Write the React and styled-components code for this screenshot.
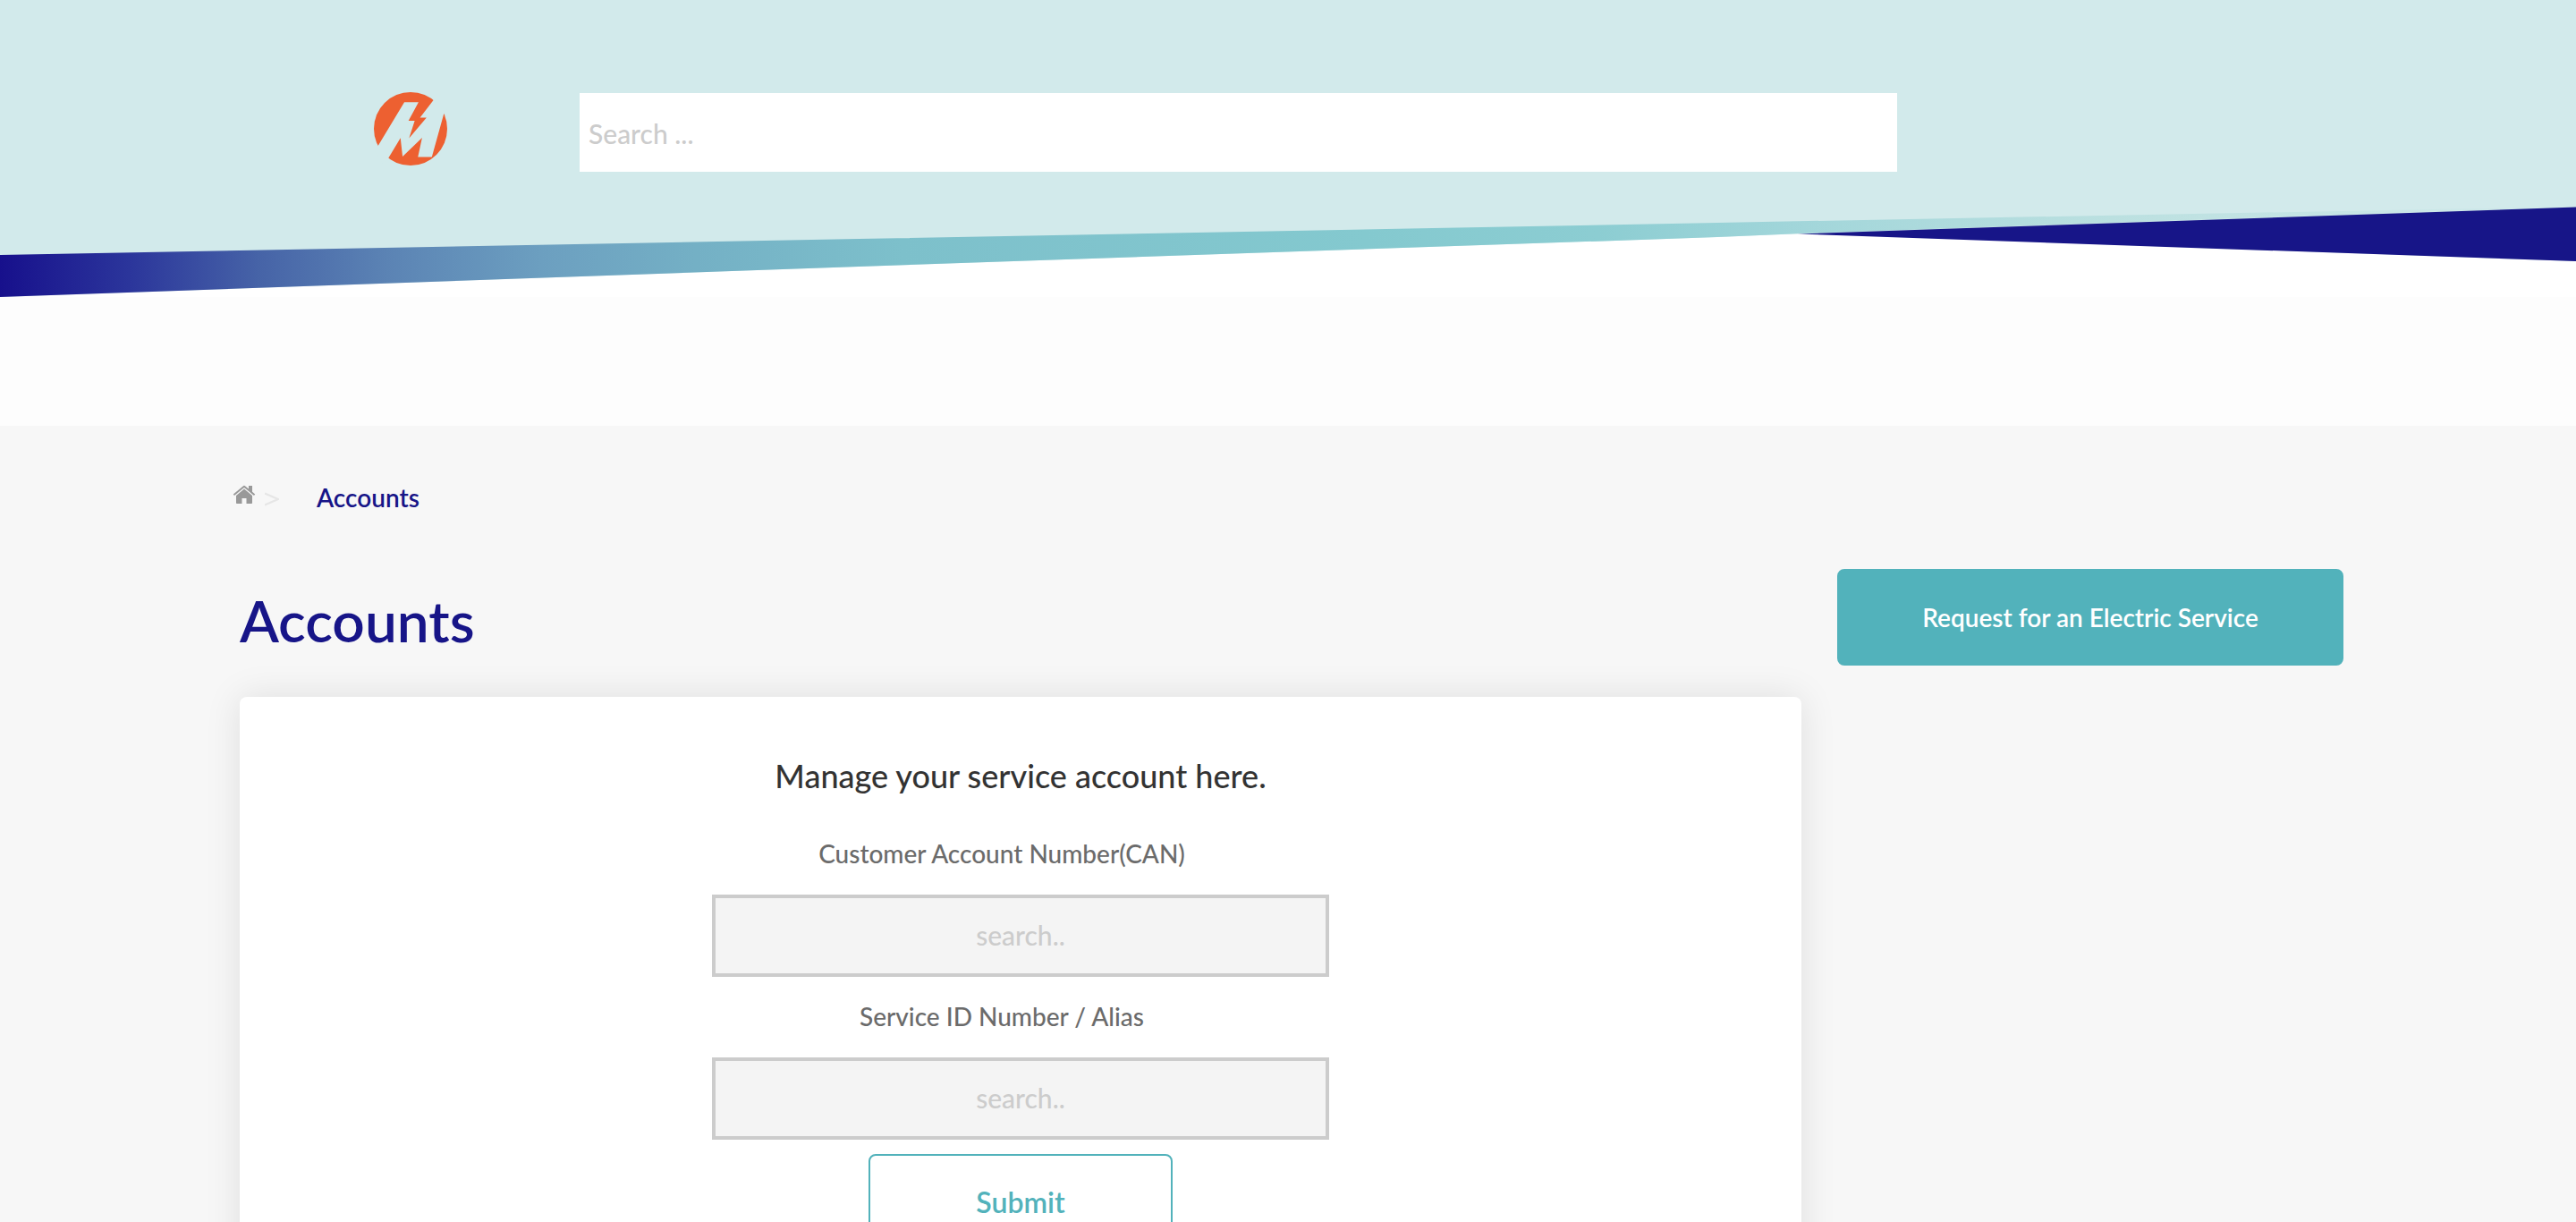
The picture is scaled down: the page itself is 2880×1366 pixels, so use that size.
import React from "react";
import styled, { createGlobalStyle } from "styled-components";

const GlobalStyle = createGlobalStyle`
  *, *::before, *::after { box-sizing: border-box; }
  body {
    margin: 0;
    background: #f7f7f7;
    font-family: Lato, "Open Sans", sans-serif;
    color: #333;
  }
`;

const Page = styled.div`
  height: 100vh;
  overflow: hidden auto;
  scrollbar-width: none;
`;

const Header = styled.header`
  background: #d2eaeb;
`;

const Toolbar = styled.div`
  display: flex;
  align-items: center;
  gap: 148px;
  padding: 103px 759px 38px 418px;
`;

const LogoLink = styled.a`
  display: block;
  flex: none;
  width: 82px;
  height: 90px;

  svg { display: block; width: 82px; height: 82px; }
`;

const SearchForm = styled.form`
  flex: 1;
  display: flex;
`;

const SiteSearch = styled.input`
  width: 100%;
  height: 88px;
  padding: 2px 10px 0;
  border: 0;
  border-radius: 0;
  background: #fff;
  font: 500 30px/36px Lato, sans-serif;
  color: #333;
  &::placeholder { color: #ccc; opacity: 1; }
`;

const Wave = styled.svg`
  display: block;
  width: 100%;
  height: 101px;
`;

const NavStrip = styled.div`
  height: 144px;
  background: #fdfdfd;
`;

const Main = styled.main`
  padding: 62px 260px 60px 268px;
`;

const Breadcrumb = styled.nav`
  display: flex;
  align-items: center;
  height: 36px;
  margin-left: -8px;
  font-size: 28px;
  line-height: 36px;
`;

const HomeLink = styled.a`
  display: block;
  width: 26px;
  height: 28px;
  color: #999;
  svg { display: block; width: 26px; height: 22px; }
`;

const Separator = styled.svg`
  width: 16px;
  height: 16px;
  margin: 4px 42px 0 10px;
`;

const Crumb = styled.a`
  color: #171588;
  font-weight: 600;
  text-decoration: none;
`;

const Columns = styled.div`
  display: grid;
  grid-template-columns: minmax(0, 1fr) 566px;
  align-items: start;
  gap: 40px;
  margin-top: 62px;
`;

const Title = styled.h1`
  margin: 18px 0 45px;
  font-size: 64px;
  line-height: 80px;
  font-weight: 600;
  color: #171588;
`;

const Card = styled.section`
  padding: 64px 40px;
  border-radius: 8px;
  background: #fff;
  box-shadow: 0 0 40px rgba(0, 0, 0, 0.1);
`;

const CardTitle = styled.h2`
  margin: 0;
  font-size: 36px;
  line-height: 48px;
  font-weight: 500;
  text-align: center;
`;

const AccountForm = styled.form`
  display: flex;
  flex-direction: column;
  align-items: center;
  width: 690px;
  max-width: 100%;
  margin: 19px auto 0;
`;

const Label = styled.label`
  margin-right: 42px;
  padding: 26px 0 28px;
  font-size: 28px;
  line-height: 36px;
  font-weight: 500;
  color: #6b6b6b;
`;

const Field = styled.input`
  width: 100%;
  height: 92px;
  padding: 0 10px 2px;
  border: 4px solid #ccc;
  border-radius: 0;
  background: #f4f4f4;
  font: 500 30px/36px Lato, sans-serif;
  color: #333;
  text-align: center;
  &::placeholder { color: #ccc; opacity: 1; }
`;

const Button = styled.button`
  width: ${(p) => (p.$primary ? "100%" : "340px")};
  height: 108px;
  margin-top: ${(p) => (p.$primary ? "0" : "16px")};
  border: 2px solid #52b2bb;
  border-radius: 8px;
  background: ${(p) => (p.$primary ? "#52b2bb" : "#fff")};
  color: ${(p) => (p.$primary ? "#fff" : "#52b2bb")};
  font: 600 ${(p) => (p.$primary ? "28px" : "32px")}/36px Lato, sans-serif;
  cursor: pointer;
`;

function Logo() {
  return (
    <svg viewBox="0 0 248 248" aria-hidden="true">
      <circle cx="124" cy="124" r="124" fill="#ed6031" />
      <path
        fill="#d2eaeb"
        d="M103 34H151L117 97H138L119 156L178 86H156L203 25L240 -4L262 40L237 72L196 219H149L163 154L97 218L90 155L49 223L30 240L4 200L15 180Z"
      />
    </svg>
  );
}

function Swoosh() {
  return (
    <Wave viewBox="0 0 2880 101" preserveAspectRatio="none" aria-hidden="true">
      <defs>
        <linearGradient id="ribbon" gradientUnits="userSpaceOnUse" x1="0" y1="0" x2="2880" y2="0">
          <stop offset="0" stopColor="#17108c" />
          <stop offset="0.05" stopColor="#2b359b" />
          <stop offset="0.1" stopColor="#4663a7" />
          <stop offset="0.15" stopColor="#5b83b4" />
          <stop offset="0.21" stopColor="#6c9fc0" />
          <stop offset="0.27" stopColor="#74b0c5" />
          <stop offset="0.35" stopColor="#7dc0cb" />
          <stop offset="0.53" stopColor="#84c9cf" />
          <stop offset="0.62" stopColor="#8ccdd2" />
          <stop offset="0.7" stopColor="#a2d6da" />
          <stop offset="0.82" stopColor="#bbe0e0" />
          <stop offset="1" stopColor="#d2eaeb" />
        </linearGradient>
      </defs>
      <path d="M0 101L960 67L1920 34L2015 30L2880 61V101Z" fill="#fff" />
      <path d="M0 54L960 36L1920 18L2880 0L2015 30L1920 34L960 67L0 101Z" fill="url(#ribbon)" />
      <path d="M2010 30.500L2880 0.500V61Z" fill="#171588" />
    </Wave>
  );
}

function HomeIcon() {
  return (
    <svg viewBox="0 0 26 22" fill="currentColor" aria-hidden="true">
      <path d="M13 4.500L4 12V20.200Q4 21 4.800 21H10.500V15H15.500V21H21.200Q22 21 22 20.200V12Z" />
      <path d="M13 0.800Q13.600 0.800 14.300 1.400L18 4.500V1H22V7.800L25.200 10.600L24 12L13 3L2 12L0.800 10.600L11.700 1.400Q12.400 0.800 13 0.800Z" />
    </svg>
  );
}

export default function App() {
  const stay = (e) => e.preventDefault();
  return (
    <Page>
      <GlobalStyle />
      <Header>
        <Toolbar>
          <LogoLink href="#" aria-label="Home page">
            <Logo />
          </LogoLink>
          <SearchForm onSubmit={stay} role="search">
            <SiteSearch type="text" placeholder="Search ..." aria-label="Search" />
          </SearchForm>
        </Toolbar>
        <Swoosh />
      </Header>
      <NavStrip />
      <Main>
        <Breadcrumb aria-label="Breadcrumb">
          <HomeLink href="#" aria-label="Home">
            <HomeIcon />
          </HomeLink>
          <Separator viewBox="0 0 16 16" aria-hidden="true">
            <path d="M0 1.500L15 8L0 14.500" fill="none" stroke="#e6e6e6" strokeWidth="2.400" />
          </Separator>
          <Crumb href="#" aria-current="page">Accounts</Crumb>
        </Breadcrumb>
        <Columns>
          <div>
            <Title>Accounts</Title>
            <Card>
              <CardTitle>Manage your service account here.</CardTitle>
              <AccountForm onSubmit={stay}>
                <Label htmlFor="can">Customer Account Number(CAN)</Label>
                <Field id="can" type="text" placeholder="search.." />
                <Label htmlFor="sin">Service ID Number / Alias</Label>
                <Field id="sin" type="text" placeholder="search.." />
                <Button type="submit">Submit</Button>
              </AccountForm>
            </Card>
          </div>
          <Button type="button" $primary>Request for an Electric Service</Button>
        </Columns>
      </Main>
    </Page>
  );
}
